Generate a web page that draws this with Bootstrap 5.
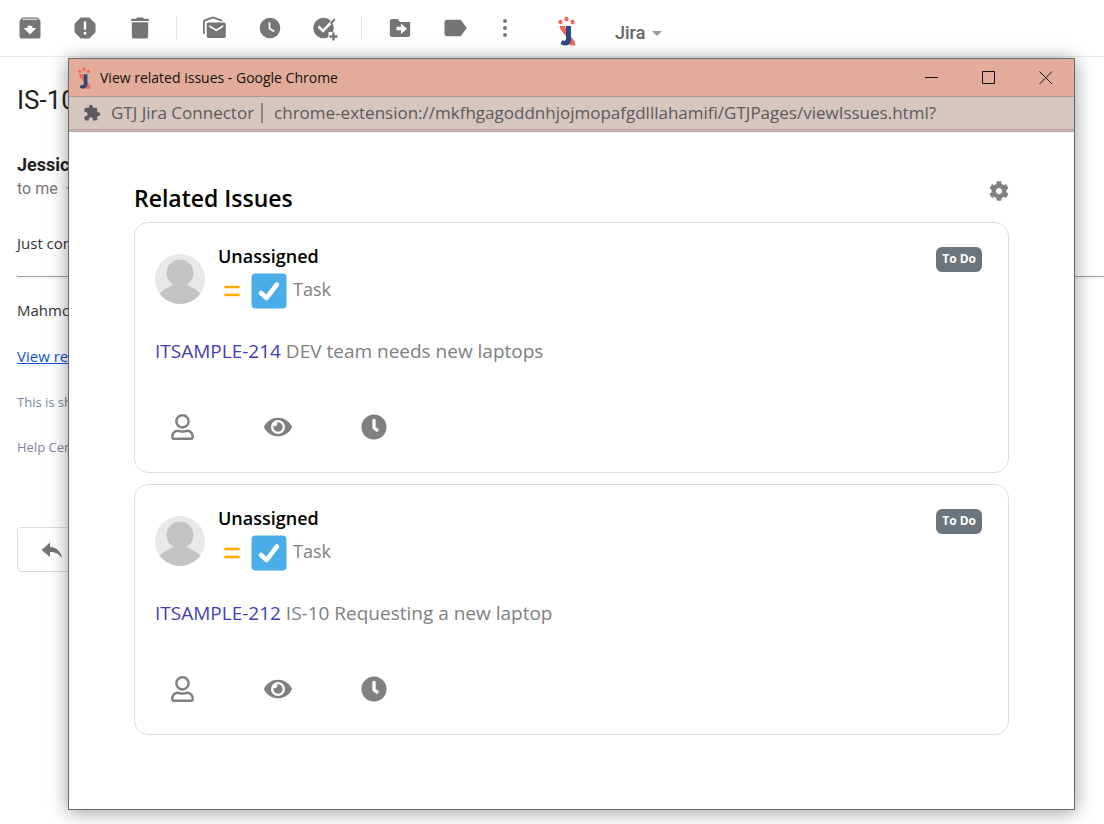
<!DOCTYPE html>
<html lang="en">
<head>
<meta charset="utf-8">
<meta name="viewport" content="width=device-width, initial-scale=1">
<title>View related issues</title>
<link href="https://cdn.jsdelivr.net/npm/bootstrap@5.3.0/dist/css/bootstrap.min.css" rel="stylesheet">
<style>
body { font-family: "Open Sans", sans-serif; color: #222; background: #fff; }
.mail-page { overflow: hidden; }
button { color: inherit; }
.icon-btn { border: 0; background: none; padding: 0; display: flex; align-items: center; justify-content: center; }
svg { display: block; fill: currentColor; }

/* Mail toolbar */
.mail-bar { height: 57px; padding-left: 16px; color: #757575; border-bottom: 1px solid #e6ecec; }
.tool-group { display: flex; align-items: center; gap: 27px; }
.tool-sep { width: 1px; height: 25px; background: #e3e7ea; margin: 0 24px 0 22px; }
.more-btn { width: 18px; }
.logo-btn { margin: 5px 0 0 43px; }
.jira-btn { margin: 10px 0 0 38px; gap: 7px; font: 500 18px/20px Roboto, sans-serif; color: #666; }
.caret { width: 0; height: 0; border: 5px solid transparent; border-top-color: #999; border-bottom: 0; }

/* Mail body */
.mail-body { padding: 27px 0 0 17px; white-space: nowrap; font-size: 15px; line-height: 20px; }
.mail-subject { font: 400 26px/32px Roboto, sans-serif; margin: 0 0 39px; }
.mail-from { font: 700 18px/20px Roboto, sans-serif; margin: 0 0 4px; }
.mail-to { font: 400 16px/20px Roboto, sans-serif; color: #777; gap: 8px; margin-bottom: 34px; }
.mail-text { margin: 0 0 26px; color: #333; }
.mail-rule { margin: -3px 0 21px; border: 0; opacity: 1; height: 3px; border-top: 1px solid #999; border-bottom: 1px solid #eee; }
.mail-link { color: #15c; }
.mail-note { font-size: 13px; color: #7a869a; margin: 0 0 25px; }
.reply-btn { width: 110px; height: 45px; margin-top: 70px; padding-left: 22px; border: 1px solid #dadce0; border-radius: 4px; background: #fff; color: #757575; }

/* Pop-up window over the mail */
.popup { position: absolute; inset: 58px 29px 14px 68px; border: 1px solid #686868; background: #fff; box-shadow: 0 2px 18px rgba(0,0,0,.4); }
.title-bar { height: 38px; padding-left: 8px; background: #e3ab99; border-bottom: 1px solid #ab968f; color: #111; font-size: 14px; }
.title-bar .caption { margin-left: 8px; }
.win-btn { width: 57px; height: 37px; color: #111; }
.url-bar { height: 35px; padding: 0 0 0 14px; background: #d7c6bf; border-bottom: 3px double #b09e98; color: #5a5a60; font-size: 17px; }
.url-bar .ext-name { margin-left: 10px; }
.url-sep { width: 2px; height: 20px; margin: 0 11px 0 7px; background: #8c8481; }
.issues { padding: 48px 65px 0; }
.issues-head { height: 42px; color: #000; }
.issues-title { font-size: 23px; font-weight: 600; line-height: 36px; margin: 0; }
.issue { border: 1px solid #dedede; border-radius: 14px; padding: 20px; min-height: 251px; color: #808080; margin-bottom: 11px; }
.avatar { margin-top: 11px; }
.who { padding-left: 13px; }
.assignee { font-size: 18px; font-weight: 600; line-height: 26px; color: #000; margin: 0; }
.kind { font-size: 18px; line-height: 24px; margin-top: 4px; }
.kind .prio { margin: 0 11px 0 6px; }
.kind .type-name { margin-left: 6px; margin-top: -4px; }
.status { margin: 4px 6px 0 0; padding: 0 6px; height: 25px; line-height: 24px; font-size: 12px; background: #6c757d; }
.summary { font-size: 19px; line-height: 26px; margin: 29px 0 0; }
.summary a { color: #3f3fb5; text-decoration: none; }
.actions { gap: 42px; margin-top: 50px; }
.actions .icon-btn { width: 54px; height: 26px; }
.gear { color: #808080; height: 22px; }
</style>
</head>
<body>
<svg width="0" height="0" class="position-absolute" aria-hidden="true">
  <symbol id="logo" viewBox="0 0 20 30">
    <g fill="#f4685c"><circle cx="3.500" cy="6" r="2.200"/><circle cx="9.500" cy="3" r="2.200"/><circle cx="15.500" cy="6" r="2.200"/>
    <path d="M2.500 10H8c1 3 2 5 4 8 3 4 6 6 6.500 11.500H13c0-5-2.500-7-5-10.500C5 15 3 14 2.500 10z"/></g>
    <path d="M9 10h5v13c0 4.500-2 6.500-5.500 6.500-2.500 0-4-.8-5-2l2-3.500c1.500 1.500 3.500 1 3.500-1.500z" fill="#2d4a7c"/>
  </symbol>
  <symbol id="avatar" viewBox="0 0 50 50">
    <clipPath id="disc"><circle cx="25" cy="25" r="25"/></clipPath>
    <circle cx="25" cy="25" r="25" fill="#e8e8e8"/>
    <g clip-path="url(#disc)" fill="#c4c4c4"><circle cx="25" cy="19" r="13.500"/><path d="M0 46C5 36 13 34 18 31h14c5 3 13 5 18 15v8H0z"/></g>
  </symbol>
  <symbol id="task" viewBox="0 0 36 36"><rect x=".5" y=".5" width="35" height="35" rx="4" fill="#4bade8"/><path d="M10 20l5.500 5L26 11.500" fill="none" stroke="#fff" stroke-width="4.500" stroke-linecap="round" stroke-linejoin="round"/></symbol>
  <symbol id="prio" viewBox="0 0 16 12"><path d="M1.500 2h13M1.500 10h13" stroke="#ffab00" stroke-width="2.600" stroke-linecap="round"/></symbol>
  <symbol id="user" viewBox="0 0 448 512"><path d="M313.6 304c-28.7 0-42.5 16-89.6 16-47.1 0-60.8-16-89.6-16C60.2 304 0 364.2 0 438.4V464c0 26.500 21.500 48 48 48h352c26.500 0 48-21.500 48-48v-25.600c0-74.200-60.200-134.400-134.400-134.400zM400 464H48v-25.600c0-47.600 38.800-86.400 86.400-86.400 14.600 0 38.300 16 89.600 16 51.700 0 74.900-16 89.600-16 47.600 0 86.400 38.800 86.400 86.400V464zM224 288c79.500 0 144-64.500 144-144S303.500 0 224 0 80 64.500 80 144s64.500 144 144 144zm0-240c52.900 0 96 43.100 96 96s-43.100 96-96 96-96-43.100-96-96 43.100-96 96-96z"/></symbol>
  <symbol id="eye" viewBox="0 0 576 512"><path d="M572.52 241.4C518.29 135.59 410.93 64 288 64S57.68 135.64 3.48 241.41a32.350 32.350 0 0 0 0 29.190C57.71 376.41 165.07 448 288 448s230.320-71.640 284.520-177.410a32.350 32.350 0 0 0 0-29.190zM288 400a144 144 0 1 1 144-144 143.930 143.930 0 0 1-144 144zm0-240a95.310 95.310 0 0 0-25.310 3.790 47.850 47.850 0 0 1-66.900 66.900A95.780 95.780 0 1 0 288 160z"/></symbol>
  <symbol id="clock" viewBox="0 0 512 512"><path d="M256 8C119 8 8 119 8 256S119 504 256 504 504 393 504 256 393 8 256 8Zm92.490 313l-20 25a16 16 0 0 1-22.490 2.500l-67-49.720a40 40 0 0 1-15-31.230V112a16 16 0 0 1 16-16h32a16 16 0 0 1 16 16V256l58 42.500A16 16 0 0 1 348.490 321Z"/></symbol>
</svg>

<div class="mail-page position-relative min-vh-100">
  <header class="mail-bar d-flex align-items-center">
    <div class="tool-group">
      <button class="icon-btn" aria-label="Archive"><svg width="28" height="28" viewBox="0 0 24 24"><path d="M20.54 5.23l-1.390-1.680C18.880 3.210 18.470 3 18 3H6c-.47 0-.88.21-1.160.55L3.460 5.230C3.170 5.570 3 6.020 3 6.500V19c0 1.100.9 2 2 2h14c1.100 0 2-.9 2-2V6.500c0-.48-.17-.93-.46-1.270zM12 17.500L6.500 12H10v-2h4v2h3.500L12 17.500zM5.120 5l.81-1h12l.94 1H5.120z"/></svg></button>
      <button class="icon-btn" aria-label="Report spam"><svg width="28" height="28" viewBox="0 0 24 24"><path d="M15.730 3H8.270L3 8.270v7.460L8.270 21h7.460L21 15.730V8.270L15.730 3zM12 17.800a1.300 1.300 0 1 1 0-2.600 1.300 1.300 0 0 1 0 2.600zm1-4.300h-2V6.500h2v7z"/></svg></button>
      <button class="icon-btn" aria-label="Delete"><svg width="28" height="28" viewBox="0 0 24 24"><path d="M5 19c0 1.100.9 2 2 2h10c1.100 0 2-.9 2-2V7H5V19zM19.500 4h-4l-1-1h-5l-1 1h-4v2h15V4z"/></svg></button>
    </div>
    <div class="tool-sep"></div>
    <div class="tool-group">
      <button class="icon-btn" aria-label="Mark as unread"><svg width="28" height="28" viewBox="0 0 28 28"><path d="M2 20V8.500C2 7 2.500 6 4 5.300L12 2.500l8 2.800c1 .5 1.500 1 1.800 2H20l-8-2.800-7 2.500c-1 .4-1.300 1-1.300 2V20z"/><path d="M7.500 8.500H23a1.800 1.800 0 0 1 1.800 1.800V22.200A1.800 1.800 0 0 1 23 24H7.500a1.800 1.800 0 0 1-1.800-1.800V10.300A1.800 1.800 0 0 1 7.500 8.500zm.7 2.600v2l7 4.200 7-4.200v-2l-7 4.200z"/></svg></button>
      <button class="icon-btn" aria-label="Snooze"><svg width="28" height="28" viewBox="0 0 28 28"><circle cx="14" cy="14" r="10.300"/><path d="M13.500 8.500v6l4.800 3" fill="none" stroke="#fff" stroke-width="1.800"/></svg></button>
      <button class="icon-btn" aria-label="Add to tasks"><svg width="28" height="28" viewBox="0 0 28 28"><circle cx="12.500" cy="14" r="10.300"/><path d="M25 3.500L12 17 7.500 12.500" fill="none" stroke="#fff" stroke-width="2.600"/><path d="M17.500 18h10.500v10H17.500z" fill="#fff"/><path d="M23 4.500l1.500 1.500-4 4.500-1.500-1.500z"/><path d="M22.500 18.500v8M18.500 22.500h8" stroke="#757575" stroke-width="2.300"/></svg></button>
    </div>
    <div class="tool-sep"></div>
    <div class="tool-group">
      <button class="icon-btn" aria-label="Move to"><svg width="28" height="28" viewBox="0 0 28 28"><path d="M24 8h-10l-2.200-3H6a2.200 2.200 0 0 0-2.200 2.200V20.800A2.200 2.200 0 0 0 6 23h16a2.200 2.200 0 0 0 2.200-2.200V8zM15 20v-3.700h-4.500v-3.500H15V9.500l6 5.200z"/></svg></button>
      <button class="icon-btn" aria-label="Labels"><svg width="28" height="28" viewBox="0 0 24 24"><path d="M17.630 5.840C17.270 5.330 16.670 5 16 5L5 5.010C3.900 5.010 3 5.900 3 7v10c0 1.100.9 1.990 2 1.990L16 19c.67 0 1.270-.33 1.630-.84L22 12l-4.370-6.160z"/></svg></button>
      <button class="icon-btn more-btn" aria-label="More"><svg width="18" height="28" viewBox="0 0 18 28"><circle cx="9" cy="7" r="2"/><circle cx="9" cy="14" r="2"/><circle cx="9" cy="21" r="2"/></svg></button>
    </div>
    <button class="icon-btn logo-btn" aria-label="Jira connector"><svg width="20" height="30"><use href="#logo"/></svg></button>
    <button class="icon-btn jira-btn">Jira <span class="caret"></span></button>
  </header>

  <main class="mail-body">
    <h1 class="mail-subject">IS-10</h1>
    <p class="mail-from">Jessica</p>
    <div class="mail-to d-flex align-items-center">to me <span class="caret"></span></div>
    <p class="mail-text">Just con</p>
    <hr class="mail-rule">
    <p class="mail-text">Mahmo</p>
    <p class="mail-text"><a class="mail-link" href="#">View re</a></p>
    <p class="mail-note">This is sh</p>
    <p class="mail-note">Help Cen</p>
    <button class="reply-btn d-flex align-items-center" aria-label="Reply"><svg width="24" height="24" viewBox="0 0 24 24"><path d="M10 9V4.500L1.500 12l8.500 7v-5c5 0 8.500 1.500 12 6-1-6-5-10.500-12-11z"/></svg></button>
  </main>

  <section class="popup" aria-label="View related issues">
    <div class="title-bar d-flex align-items-center">
      <svg width="15" height="22"><use href="#logo"/></svg>
      <span class="caption">View related issues - Google Chrome</span>
      <div class="d-flex ms-auto">
        <button class="icon-btn win-btn" aria-label="Minimize"><svg width="14" height="14"><path d="M0 6.500h13" stroke="currentColor"/></svg></button>
        <button class="icon-btn win-btn" aria-label="Maximize"><svg width="14" height="14"><path d="M.5.5h12v12H.5z" fill="none" stroke="currentColor"/></svg></button>
        <button class="icon-btn win-btn" aria-label="Close"><svg width="14" height="14"><path d="M.5.5l12.500 12.500M13 .5L.5 13" stroke="currentColor"/></svg></button>
      </div>
    </div>
    <div class="url-bar d-flex align-items-center">
      <svg width="18" height="18" viewBox="0 0 24 24"><path d="M20.500 11H19V7c0-1.100-.9-2-2-2h-4V3.500C13 2.120 11.880 1 10.500 1S8 2.120 8 3.500V5H4c-1.100 0-1.990.9-1.990 2v3.800H3.500c1.490 0 2.700 1.210 2.700 2.700s-1.210 2.700-2.700 2.700H2V20c0 1.100.9 2 2 2h3.800v-1.500c0-1.490 1.210-2.700 2.700-2.700 1.490 0 2.700 1.210 2.700 2.700V22H17c1.100 0 2-.9 2-2v-4h1.500c1.380 0 2.500-1.120 2.500-2.500S21.880 11 20.500 11z"/></svg>
      <span class="ext-name">GTJ Jira Connector</span>
      <span class="url-sep"></span>
      <span class="url">chrome-extension://mkfhgagoddnhjojmopafgdlllahamifi/GTJPages/viewIssues.html?</span>
    </div>

    <div class="issues">
      <div class="issues-head d-flex justify-content-between">
        <h2 class="issues-title">Related Issues</h2>
        <button class="icon-btn gear" aria-label="Settings"><svg width="20" height="20" viewBox="0 0 512 512"><path d="M487.4 315.7l-42.600-24.600c4.300-23.200 4.300-47 0-70.200l42.600-24.600c4.900-2.800 7.100-8.600 5.500-14-11.100-35.600-30-67.800-54.700-94.600-3.800-4.100-10-5.100-14.800-2.300L380.8 110c-17.900-15.400-38.500-27.300-60.800-35.100V25.8c0-5.600-3.900-10.500-9.400-11.700-36.700-8.200-74.300-7.800-109.200 0-5.500 1.200-9.400 6.100-9.400 11.700V75c-22.200 7.900-42.800 19.800-60.800 35.100L88.7 85.500c-4.900-2.800-11-1.900-14.800 2.300-24.700 26.700-43.600 58.900-54.700 94.600-1.700 5.400.6 11.200 5.500 14L67.3 221c-4.300 23.200-4.300 47 0 70.200l-42.600 24.600c-4.900 2.800-7.100 8.600-5.500 14 11.100 35.600 30 67.800 54.700 94.600 3.800 4.100 10 5.100 14.800 2.300l42.600-24.600c17.900 15.400 38.500 27.300 60.800 35.100v49.200c0 5.600 3.900 10.500 9.400 11.700 36.700 8.200 74.300 7.800 109.200 0 5.500-1.200 9.400-6.100 9.400-11.700v-49.200c22.200-7.900 42.800-19.800 60.800-35.100l42.600 24.600c4.900 2.800 11 1.900 14.800-2.300 24.700-26.700 43.600-58.900 54.700-94.600 1.500-5.500-.7-11.300-5.600-14.100zM256 336c-44.100 0-80-35.900-80-80s35.900-80 80-80 80 35.900 80 80-35.900 80-80 80z"/></svg></button>
      </div>

      <article class="issue">
        <div class="d-flex align-items-start">
          <svg class="avatar" width="50" height="50"><use href="#avatar"/></svg>
          <div class="ms-auto order-last"><span class="badge status d-block">To Do</span></div>
          <div class="who">
            <h3 class="assignee">Unassigned</h3>
            <div class="kind d-flex align-items-center">
              <svg class="prio" width="16" height="12"><use href="#prio"/></svg>
              <svg width="36" height="36"><use href="#task"/></svg>
              <span class="type-name">Task</span>
            </div>
          </div>
        </div>
        <p class="summary"><a href="#">ITSAMPLE-214</a> DEV team needs new laptops</p>
        <div class="actions d-flex">
          <button class="icon-btn" aria-label="Assign"><svg width="23" height="26"><use href="#user"/></svg></button>
          <button class="icon-btn" aria-label="Watch"><svg width="28" height="26"><use href="#eye"/></svg></button>
          <button class="icon-btn" aria-label="Log time"><svg width="26" height="26"><use href="#clock"/></svg></button>
        </div>
      </article>

      <article class="issue">
        <div class="d-flex align-items-start">
          <svg class="avatar" width="50" height="50"><use href="#avatar"/></svg>
          <div class="ms-auto order-last"><span class="badge status d-block">To Do</span></div>
          <div class="who">
            <h3 class="assignee">Unassigned</h3>
            <div class="kind d-flex align-items-center">
              <svg class="prio" width="16" height="12"><use href="#prio"/></svg>
              <svg width="36" height="36"><use href="#task"/></svg>
              <span class="type-name">Task</span>
            </div>
          </div>
        </div>
        <p class="summary"><a href="#">ITSAMPLE-212</a> IS-10 Requesting a new laptop</p>
        <div class="actions d-flex">
          <button class="icon-btn" aria-label="Assign"><svg width="23" height="26"><use href="#user"/></svg></button>
          <button class="icon-btn" aria-label="Watch"><svg width="28" height="26"><use href="#eye"/></svg></button>
          <button class="icon-btn" aria-label="Log time"><svg width="26" height="26"><use href="#clock"/></svg></button>
        </div>
      </article>
    </div>
  </section>
</div>
<script src="https://cdn.jsdelivr.net/npm/bootstrap@5.3.0/dist/js/bootstrap.bundle.min.js"></script>
</body>
</html>
